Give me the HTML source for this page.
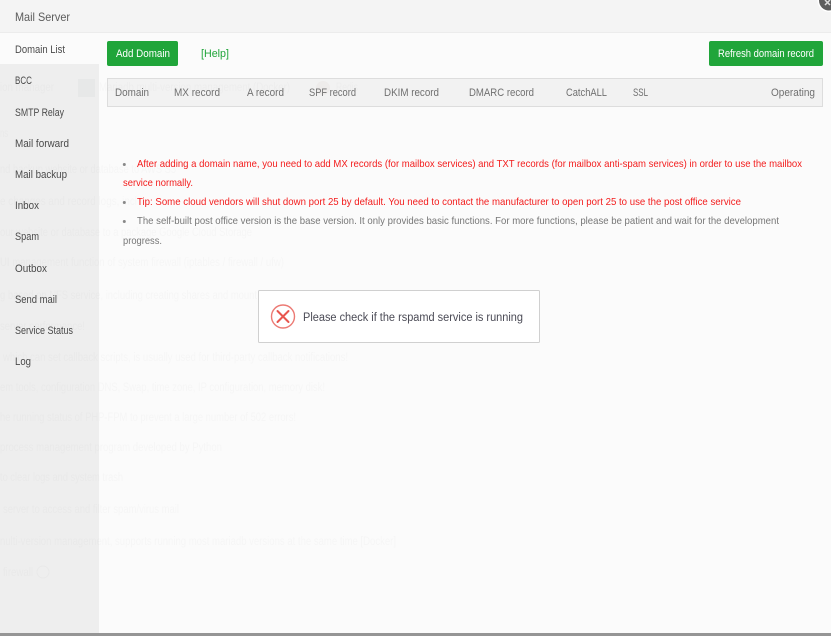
<!DOCTYPE html>
<html><head><meta charset="utf-8"><title>Mail Server</title>
<style>
html,body{margin:0;padding:0;width:831px;height:636px;overflow:hidden;background:#fbfbfb}
svg{display:block;font-family:"Liberation Sans",sans-serif}
.g{mix-blend-mode:multiply}
.g text{font-size:11.5px;fill:#fafafa}
.n text{font-size:11px;fill:#4a4a4a}
.h text{font-size:11px;fill:#707070}
.r{font-size:10.5px;fill:#f31c1c}
.k{font-size:10.5px;fill:#777}
</style></head><body>
<svg width="831" height="636" viewBox="0 0 831 636" xmlns="http://www.w3.org/2000/svg">
<rect width="831" height="636" fill="#fbfbfb"/>
<rect x="0" y="33" width="99" height="600" fill="#eee"/>
<rect x="0" y="0" width="831" height="32" fill="#f4f4f4"/>
<rect x="0" y="32" width="831" height="1" fill="#ececec"/>
<rect x="0" y="33" width="99" height="31" fill="#fbfbfb"/>

<rect x="107.500" y="78.500" width="715" height="28" fill="#f2f2f2" stroke="#ddd"/>

<g class="g">
<rect x="78" y="79" width="17" height="18" fill="#f8f9f9"/>
<text x="0" y="91" textLength="54" lengthAdjust="spacingAndGlyphs">ion manager</text>
<text x="99" y="91" textLength="191" lengthAdjust="spacingAndGlyphs">Mariadb multi-version management (Docker)</text>
<circle cx="323" cy="88" r="7" fill="#fbf9f8"/>
<text x="336" y="91" textLength="22" lengthAdjust="spacingAndGlyphs">Redis</text>
<text x="0" y="137" textLength="8" lengthAdjust="spacingAndGlyphs">ns</text>
<text x="0" y="173" textLength="176" lengthAdjust="spacingAndGlyphs">nd backup website or database to AWS S3</text>
<text x="0" y="205" textLength="137" lengthAdjust="spacingAndGlyphs">e changes and record logs, incl</text>
<text x="0" y="236" textLength="252" lengthAdjust="spacingAndGlyphs">our website or database to a package Google Cloud Storage</text>
<text x="0" y="266" textLength="284" lengthAdjust="spacingAndGlyphs">UI management function of system firewall (iptables / firewall / ufw)</text>
<text x="0" y="299" textLength="257" lengthAdjust="spacingAndGlyphs">g based on NFS service, including creating shares and mount</text>
<text x="0" y="330" textLength="85" lengthAdjust="spacingAndGlyphs">server performance!</text>
<text x="3" y="361" textLength="345" lengthAdjust="spacingAndGlyphs">which can set callback scripts, is usually used for third-party callback notifications!</text>
<text x="0" y="391" textLength="325" lengthAdjust="spacingAndGlyphs">em tools, configuration DNS, Swap, time zone, IP configuration, memory disk!</text>
<text x="0" y="421" textLength="296" lengthAdjust="spacingAndGlyphs">he running status of PHP-FPM to prevent a large number of 502 errors!</text>
<text x="0" y="451" textLength="222" lengthAdjust="spacingAndGlyphs">process management program developed by Python</text>
<text x="0" y="481" textLength="123" lengthAdjust="spacingAndGlyphs">to clear logs and system trash</text>
<text x="3" y="513" textLength="176" lengthAdjust="spacingAndGlyphs">server to access and filter spam/virus mail</text>
<text x="0" y="545" textLength="396" lengthAdjust="spacingAndGlyphs">nulti-version management, supports running most mariadb versions at the same time [Docker]</text>
<text x="3" y="576" textLength="30" lengthAdjust="spacingAndGlyphs">firewall</text>
<circle cx="43" cy="572" r="6" fill="none" stroke="#fafafa"/>
</g>

<text x="15" y="21" font-size="12" fill="#5c5c5c" textLength="55" lengthAdjust="spacingAndGlyphs">Mail Server</text>

<g class="n">
<text x="15" y="53" textLength="50" lengthAdjust="spacingAndGlyphs">Domain List</text>
<text x="15" y="84" textLength="17" lengthAdjust="spacingAndGlyphs">BCC</text>
<text x="15" y="116" textLength="49" lengthAdjust="spacingAndGlyphs">SMTP Relay</text>
<text x="15" y="147" textLength="54" lengthAdjust="spacingAndGlyphs">Mail forward</text>
<text x="15" y="178" textLength="52" lengthAdjust="spacingAndGlyphs">Mail backup</text>
<text x="15" y="209" textLength="24" lengthAdjust="spacingAndGlyphs">Inbox</text>
<text x="15" y="240" textLength="24" lengthAdjust="spacingAndGlyphs">Spam</text>
<text x="15" y="272" textLength="32" lengthAdjust="spacingAndGlyphs">Outbox</text>
<text x="15" y="303" textLength="42" lengthAdjust="spacingAndGlyphs">Send mail</text>
<text x="15" y="334" textLength="58" lengthAdjust="spacingAndGlyphs">Service Status</text>
<text x="15" y="365" textLength="16" lengthAdjust="spacingAndGlyphs">Log</text>
</g>

<rect x="107" y="41" width="71" height="25" rx="2" fill="#20a53a"/>
<text x="116" y="57" font-size="11" fill="#fff" textLength="54" lengthAdjust="spacingAndGlyphs">Add Domain</text>
<text x="201" y="57" font-size="11" fill="#20a53a" textLength="28" lengthAdjust="spacingAndGlyphs">[Help]</text>
<rect x="709" y="41" width="114" height="25" rx="2" fill="#20a53a"/>
<text x="718" y="57" font-size="11" fill="#fff" textLength="96" lengthAdjust="spacingAndGlyphs">Refresh domain record</text>

<g class="h">
<text x="115" y="96" textLength="34" lengthAdjust="spacingAndGlyphs">Domain</text>
<text x="174" y="96" textLength="46" lengthAdjust="spacingAndGlyphs">MX record</text>
<text x="247" y="96" textLength="37" lengthAdjust="spacingAndGlyphs">A record</text>
<text x="309" y="96" textLength="47" lengthAdjust="spacingAndGlyphs">SPF record</text>
<text x="384" y="96" textLength="55" lengthAdjust="spacingAndGlyphs">DKIM record</text>
<text x="469" y="96" textLength="65" lengthAdjust="spacingAndGlyphs">DMARC record</text>
<text x="566" y="96" textLength="41" lengthAdjust="spacingAndGlyphs">CatchALL</text>
<text x="633" y="96" textLength="15" lengthAdjust="spacingAndGlyphs">SSL</text>
<text x="771" y="96" textLength="44" lengthAdjust="spacingAndGlyphs">Operating</text>
</g>

<circle cx="124.300" cy="164.500" r="1.500" fill="#888"/>
<text class="r" x="137" y="167" textLength="665" lengthAdjust="spacingAndGlyphs">After adding a domain name, you need to add MX records (for mailbox services) and TXT records (for mailbox anti-spam services) in order to use the mailbox</text>
<text class="r" x="123" y="186" textLength="70" lengthAdjust="spacingAndGlyphs">service normally.</text>
<circle cx="124.300" cy="202.500" r="1.500" fill="#888"/>
<text class="r" x="137" y="205" textLength="604" lengthAdjust="spacingAndGlyphs">Tip: Some cloud vendors will shut down port 25 by default. You need to contact the manufacturer to open port 25 to use the post office service</text>
<circle cx="124.300" cy="221.500" r="1.500" fill="#888"/>
<text class="k" x="137" y="224" textLength="642" lengthAdjust="spacingAndGlyphs">The self-built post office version is the base version. It only provides basic functions. For more functions, please be patient and wait for the development</text>
<text class="k" x="123" y="244" textLength="39" lengthAdjust="spacingAndGlyphs">progress.</text>

<rect x="258.500" y="290.500" width="281" height="52" rx="1" fill="#fff" stroke="#d0d0d0"/>
<circle cx="283" cy="316.500" r="11.500" fill="none" stroke="#ec7a74" stroke-width="1.400"/>
<path d="M277.500 311 L288.500 322 M288.500 311 L277.500 322" stroke="#e8564e" stroke-width="2" fill="none" stroke-linecap="round"/>
<text x="303" y="321" font-size="11.5" fill="#4a4a55" textLength="220" lengthAdjust="spacingAndGlyphs">Please check if the rspamd service is running</text>

<circle cx="829" cy="0.500" r="11.500" fill="#fff"/>
<circle cx="829" cy="0.500" r="10" fill="#5f5f5f"/>
<path d="M825 5 L830 0 M830 5 L825 0" stroke="#ddd" stroke-width="1.500"/>

<rect x="0" y="633" width="831" height="3" fill="#959595"/>
</svg>
</body></html>
